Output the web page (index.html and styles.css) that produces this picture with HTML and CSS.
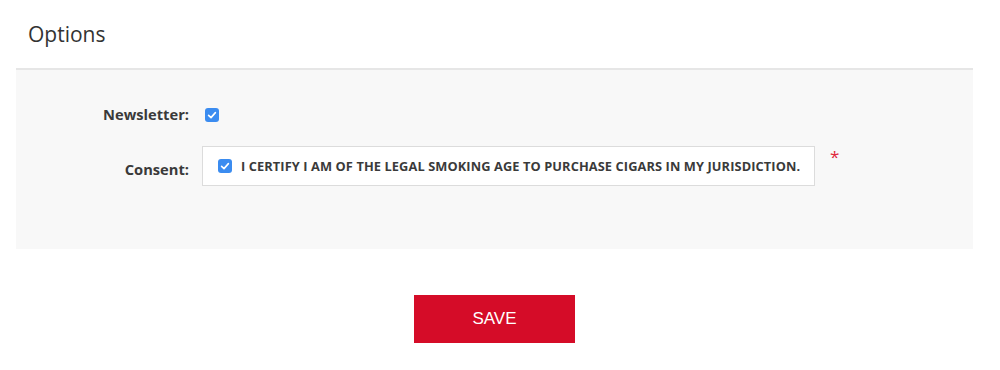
FILE: index.html
```html
<!DOCTYPE html>
<html>
<head>
<meta charset="utf-8">
<link rel="stylesheet" href="styles.css">
</head>
<body>
<div class="page">
  <h2 class="title">Options</h2>
  <div class="panel">
    <div class="row newsletter">
      <div class="label">Newsletter:</div>
      <div class="field">
        <span class="check"><svg viewBox="0 0 14 14" width="14" height="14"><path d="M3.6 7.3 L6 9.6 L10.4 4.6" fill="none" stroke="#fff" stroke-width="1.6" stroke-linecap="round" stroke-linejoin="round"/></svg></span>
      </div>
    </div>
    <div class="row consent">
      <div class="label">Consent:</div>
      <div class="field">
        <div class="consent-box">
          <span class="check"><svg viewBox="0 0 14 14" width="14" height="14"><path d="M3.6 7.3 L6 9.6 L10.4 4.6" fill="none" stroke="#fff" stroke-width="1.6" stroke-linecap="round" stroke-linejoin="round"/></svg></span>
          <span class="consent-text">I CERTIFY I AM OF THE LEGAL SMOKING AGE TO PURCHASE CIGARS IN MY JURISDICTION.</span>
        </div>
        <span class="req">*</span>
      </div>
    </div>
  </div>
  <div class="actions">
    <button class="save">SAVE</button>
  </div>
</div>
</body>
</html>
```

FILE: styles.css
```css
html, body {
  margin: 0;
  padding: 0;
  background: #fff;
}
.page {
  padding: 0 27px 0 16px;
  font-family: "Open Sans", "Liberation Sans", sans-serif;
  color: #333;
}
.title {
  margin: 0;
  padding: 20px 0 0 12px;
  height: 68px;
  box-sizing: border-box;
  font-size: 21px;
  font-weight: 400;
  color: #333;
  line-height: 28px;
}
.panel {
  background: #f8f8f8;
  border-top: 2px solid #e6e6e6;
  height: 181px;
  box-sizing: border-box;
  padding-top: 33px;
}
.row {
  display: flex;
  align-items: center;
}
.label {
  width: 173px;
  text-align: right;
  font-weight: 700;
  font-size: 14.7px;
  color: #3a3a3a;
  box-sizing: border-box;
}
.field {
  display: flex;
  align-items: flex-start;
}
.newsletter {
  height: 22px;
}
.newsletter .field {
  padding-left: 16px;
  padding-top: 2px;
}
.consent {
  margin-top: 21px;
}
.consent .field {
  padding-left: 13px;
}
.consent .label {
  padding-top: 6px;
}
.check {
  display: inline-flex;
  width: 14px;
  height: 14px;
  border-radius: 3px;
  background: #3b8cf0;
  flex: none;
}
.consent-box {
  display: flex;
  align-items: center;
  width: 613px;
  height: 40px;
  box-sizing: border-box;
  background: #fff;
  border: 1px solid #dcdcdc;
  padding-left: 15px;
}
.consent-text {
  margin-left: 9px;
  font-weight: 700;
  font-size: 12.8px;
  color: #3a3a3a;
  letter-spacing: 0.1px;
}
.req {
  color: #e0283c;
  font-size: 17px;
  margin-left: 15px;
  margin-top: 2px;
  line-height: 17px;
}
.actions {
  display: flex;
  justify-content: center;
  padding-top: 46px;
}
.save {
  width: 161px;
  height: 48px;
  background: #d50c28;
  color: #fff;
  border: none;
  font-family: "Liberation Sans", Arial, sans-serif;
  font-size: 17px;
}
```
